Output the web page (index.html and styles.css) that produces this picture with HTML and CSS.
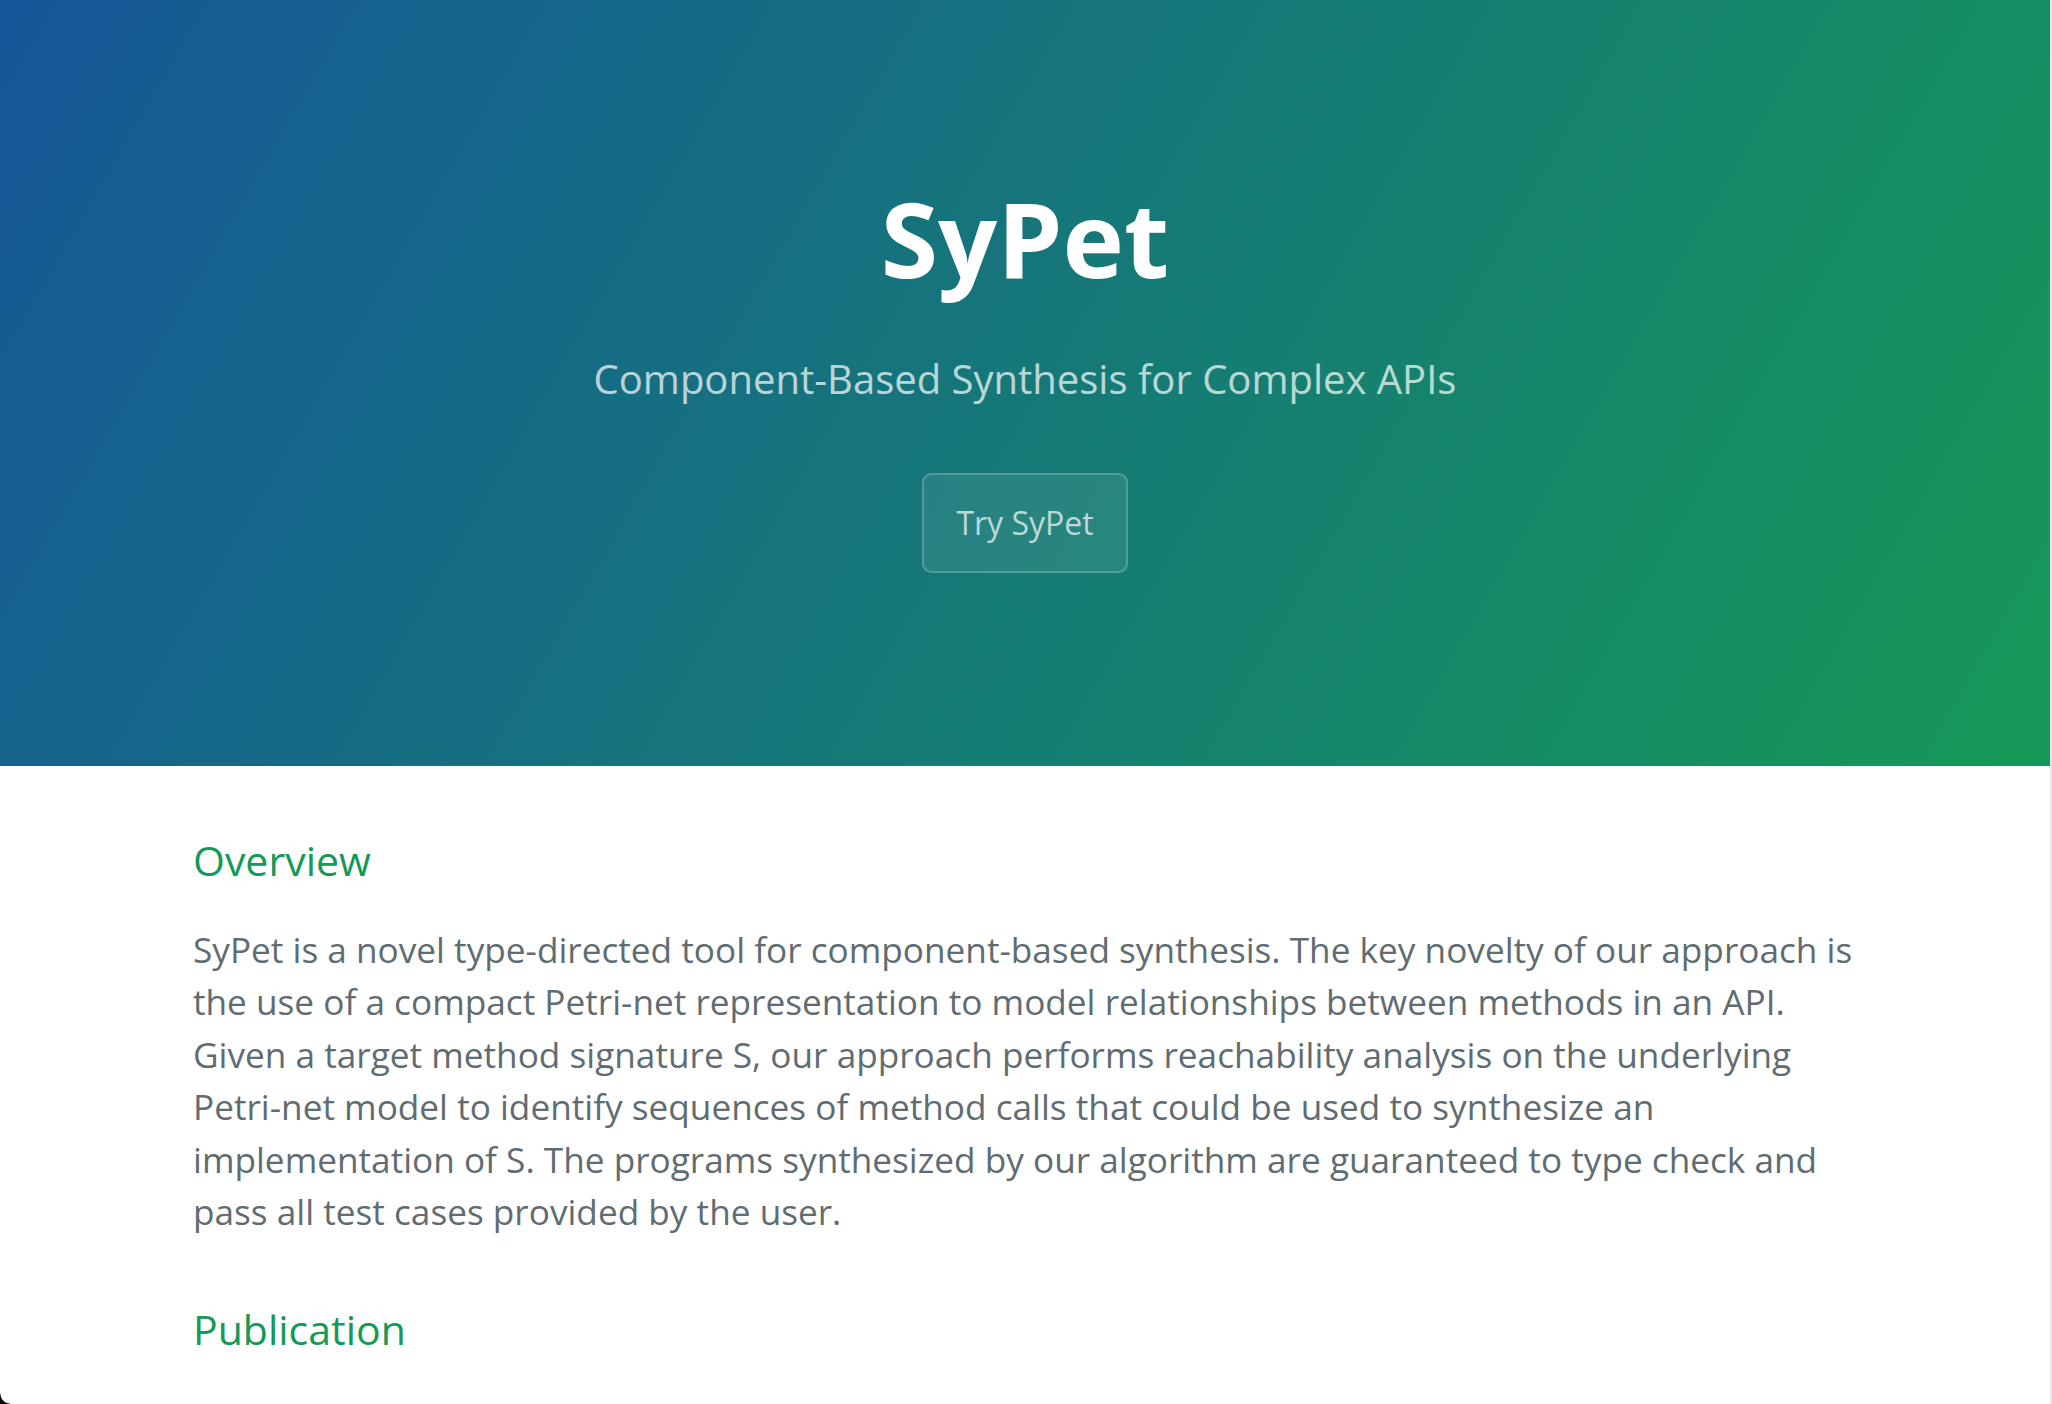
FILE: index.html
```html
<!DOCTYPE html>
<html lang="en">
<head>
<meta charset="utf-8">
<title>SyPet</title>
<link rel="stylesheet" href="styles.css">
</head>
<body>
<section class="page-header">
  <h1 class="project-name">SyPet</h1>
  <h2 class="project-tagline">Component-Based Synthesis for Complex APIs</h2>
  <a class="btn" href="#">Try SyPet</a>
</section>
<section class="main-content">
  <h2 class="section-title first">Overview</h2>
  <p class="text">SyPet is a novel type-directed tool for component-based synthesis. The key novelty of our approach is the use of a compact Petri-net representation to model relationships between methods in an API. Given a target method signature S, our approach performs reachability analysis on the underlying Petri-net model to identify sequences of method calls that could be used to synthesize an implementation of S. The programs synthesized by our algorithm are guaranteed to type check and pass all test cases provided by the user.</p>
  <h2 class="section-title">Publication</h2>
</section>
<div class="corner"></div>
</body>
</html>
```
FILE: styles.css
```css
* { box-sizing: border-box; }
html { background: #e7e7e7; }
body {
  margin: 0 2px 0 0;
  background: #fff;
  font-family: "Open Sans", "Liberation Sans", Arial, sans-serif;
  color: #606c71;
  min-height: 1404px;
}
.page-header {
  color: #fff;
  text-align: center;
  background-color: #159957;
  background-image: linear-gradient(120deg, #155799, #159957);
  padding: 160px 192px 160px;
}
.project-name {
  font-size: 104px;
  font-weight: 700;
  line-height: 156px;
  margin: 0 0 3px;
}
.project-tagline {
  font-size: 40px;
  font-weight: 400;
  line-height: 60px;
  opacity: 0.7;
  margin: 33px 0 64px;
}
.btn {
  display: inline-block;
  margin-bottom: 33px;
  padding: 24px 32px;
  font-size: 32px;
  line-height: 48px;
  color: rgba(255, 255, 255, 0.7);
  text-decoration: none;
  background-color: rgba(255, 255, 255, 0.08);
  border: 2px solid rgba(255, 255, 255, 0.2);
  border-radius: 9.6px;
}
.main-content {
  max-width: 2048px;
  margin: 0 auto;
  padding: 64px 192px;
}
.section-title {
  font-size: 41px;
  font-weight: 400;
  line-height: 61.5px;
  color: #159957;
  margin: 61px 0 31px;
}
.section-title.first { margin-top: 0; }
.text {
  font-size: 35.2px;
  line-height: 52.5px;
  margin: 0;
}
.corner {
  position: fixed;
  left: 0;
  bottom: 0;
  width: 10px;
  height: 10px;
  background: radial-gradient(circle at 10px 0, transparent 9px, #000 10px);
}
```
